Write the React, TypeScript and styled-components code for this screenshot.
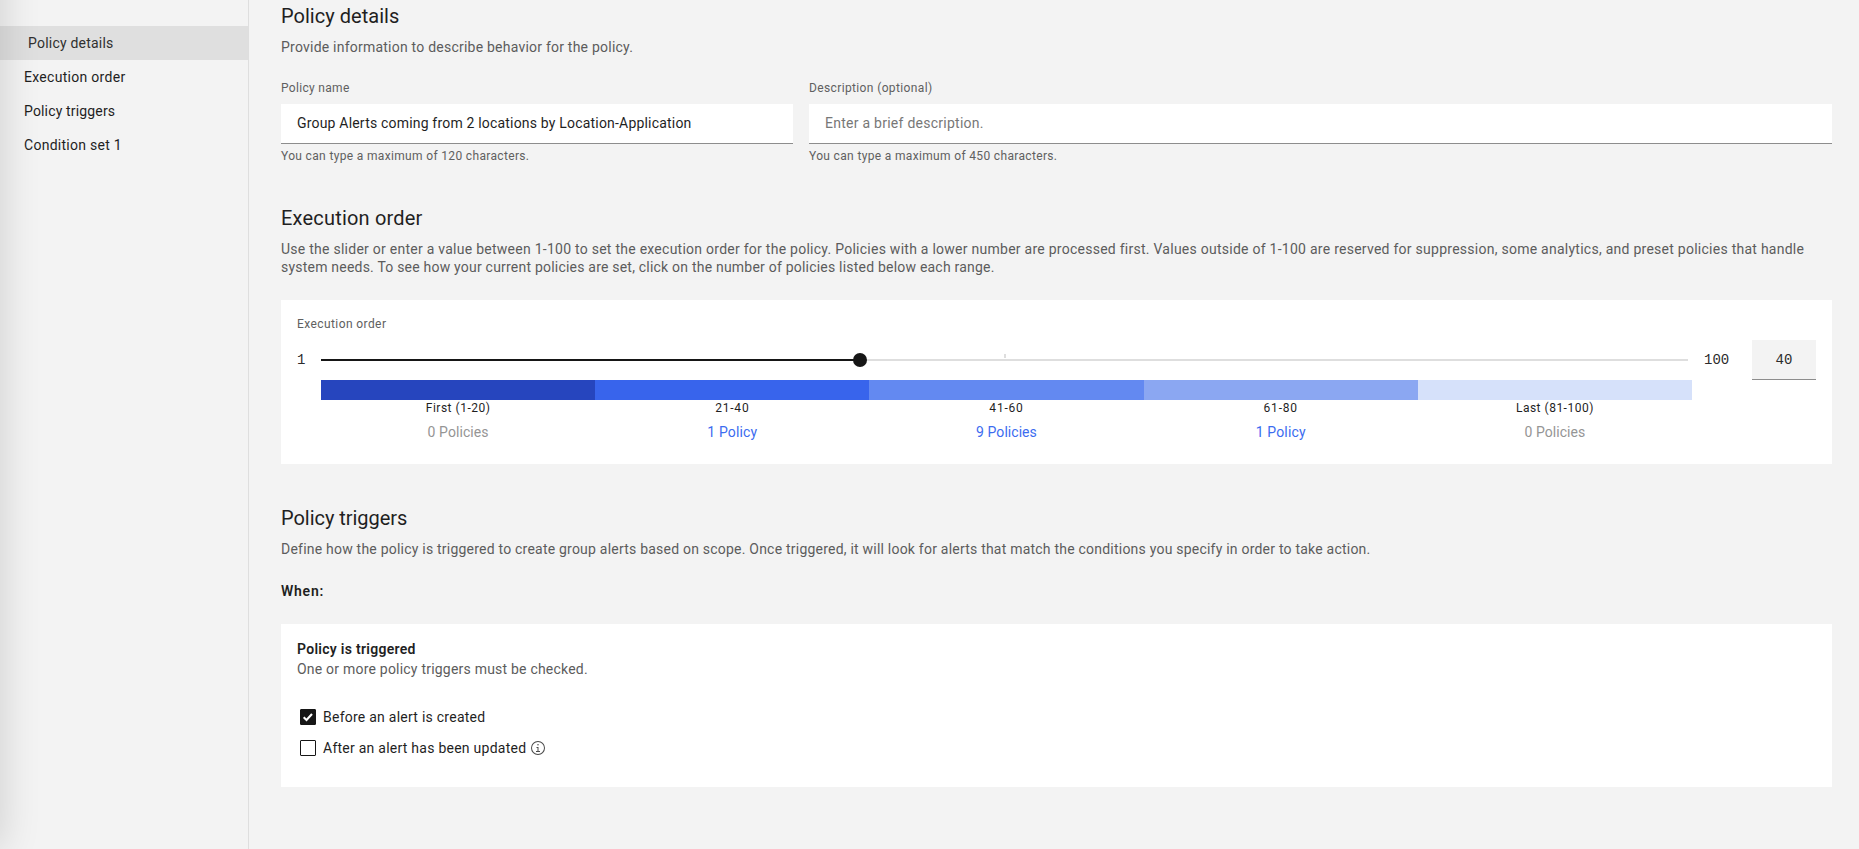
import React from 'react';
import styled, { createGlobalStyle } from 'styled-components';

const GlobalStyle = createGlobalStyle`
  *, *::before, *::after { box-sizing: border-box; }
  body {
    margin: 0;
    background: #f3f3f3;
    color: #1f1f1f;
    font-family: Roboto, "Liberation Sans", sans-serif;
    font-size: 14px;
    line-height: 18px;
  }
`;

const Page = styled.div`
  display: flex;
  height: 849px;
  overflow: hidden;
`;

const EdgeShadow = styled.div`
  position: absolute;
  top: -60px;
  left: -40px;
  width: 40px;
  height: 909px;
  box-shadow: 0 0 40px rgba(0, 0, 0, 0.16);
  pointer-events: none;
`;

const Sidebar = styled.nav`
  flex: 0 0 249px;
  padding-top: 26px;
  border-right: 1px solid #dedede;
`;

const NavItem = styled.a<{ $active?: boolean; $track: number }>`
  display: block;
  height: 34px;
  line-height: 34px;
  padding-left: ${(p) => (p.$active ? 28 : 24)}px;
  background: ${(p) => (p.$active ? '#dfdfdf' : 'transparent')};
  color: ${(p) => (p.$active ? '#303030' : '#1f1f1f')};
  letter-spacing: ${(p) => p.$track}px;
`;

const Main = styled.main`
  flex: 1;
  padding: 3px 27px 0 32px;
`;

const Section = styled.section`
  & + & { margin-top: 41px; }
`;

const Heading = styled.h2<{ $track: number }>`
  margin: 0 0 9px;
  font-size: 20px;
  font-weight: 400;
  line-height: 26px;
  letter-spacing: ${(p) => p.$track}px;
`;

const Lead = styled.p<{ $track: number }>`
  margin: 0;
  color: #5c5c5c;
  letter-spacing: ${(p) => p.$track}px;
  white-space: nowrap;
`;

const Fields = styled.div`
  display: grid;
  grid-template-columns: 512px 1fr;
  gap: 16px;
  margin-top: 24px;
`;

const Field = styled.div`
  display: flex;
  flex-direction: column;
`;

const Caption = styled.label<{ $track: number }>`
  display: block;
  font-size: 12px;
  line-height: 16px;
  color: #606060;
  letter-spacing: ${(p) => p.$track}px;
`;

const TextInput = styled.input<{ $track: number }>`
  height: 40px;
  margin: 8px 0 4px;
  padding: 0 16px 1px;
  border: 0;
  border-bottom: 1px solid #8d8d8d;
  border-radius: 0;
  outline: 0;
  background: #fff;
  color: #1f1f1f;
  font: inherit;
  letter-spacing: ${(p) => p.$track}px;
  &::placeholder { color: #777; opacity: 1; }
`;

const Card = styled.div<{ $bottom: number }>`
  margin-top: 24px;
  padding: 16px 16px ${(p) => p.$bottom}px;
  background: #fff;
`;

const SliderRow = styled.div`
  display: flex;
  align-items: center;
  height: 40px;
  margin-top: 8px;
`;

const Bound = styled.span<{ $width: number }>`
  flex: 0 0 ${(p) => p.$width}px;
  color: #2c2c2c;
  font-family: "Liberation Mono", monospace;
`;

const Track = styled.div`
  position: relative;
  flex: 1;
  height: 2px;
  margin-right: 16px;
  background: #dedede;
`;

const Filled = styled.div`
  height: 2px;
  background: #161616;
`;

const Thumb = styled.div`
  position: absolute;
  top: -6px;
  width: 14px;
  height: 14px;
  margin-left: -7px;
  border-radius: 50%;
  background: #161616;
`;

const Tick = styled.div`
  position: absolute;
  top: -5px;
  left: 50%;
  width: 2px;
  height: 4px;
  margin-left: -1px;
  background: #dedede;
`;

const NumberInput = styled.input`
  width: 64px;
  height: 40px;
  padding: 0;
  border: 0;
  border-bottom: 1px solid #8d8d8d;
  border-radius: 0;
  outline: 0;
  background: #f3f3f3;
  color: #2c2c2c;
  text-align: center;
  font: 14px/18px "Liberation Mono", monospace;
`;

const Bands = styled.div`
  display: grid;
  grid-template-columns: repeat(5, 1fr);
  width: 1371px;
  margin-left: 24px;
`;

const Band = styled.div`
  display: flex;
  flex-direction: column;
  align-items: center;
`;

const Swatch = styled.div<{ $color: string }>`
  align-self: stretch;
  height: 20px;
  background: ${(p) => p.$color};
`;

const Range = styled.span<{ $track: number }>`
  font-size: 12px;
  line-height: 16px;
  letter-spacing: ${(p) => p.$track}px;
`;

const Count = styled.a<{ $empty: boolean; $track: number }>`
  margin-top: 7px;
  color: ${(p) => (p.$empty ? '#959595' : '#3c6cf0')};
  letter-spacing: ${(p) => p.$track}px;
`;

const Strong = styled.h3<{ $track: number; $top?: number; $bottom?: number }>`
  margin: ${(p) => p.$top ?? 0}px 0 ${(p) => p.$bottom ?? 0}px;
  font-size: 14px;
  font-weight: 600;
  line-height: 18px;
  letter-spacing: ${(p) => p.$track}px;
`;

const Options = styled.div`
  display: flex;
  flex-direction: column;
  gap: 13px;
  margin-top: 30px;
  padding-left: 3px;
`;

const Option = styled.div<{ $track: number }>`
  display: flex;
  align-items: center;
  height: 18px;
  letter-spacing: ${(p) => p.$track}px;
  svg { flex: none; }
`;

const OptionText = styled.span`
  margin: 0 4px 0 7px;
`;

const Box = ({ checked }: { checked?: boolean }) => (
  <svg width="16" height="16" viewBox="0 0 16 16">
    <rect x="0.5" y="0.5" width="15" height="15" rx="0.5" fill={checked ? '#161616' : '#fff'} stroke="#161616" />
    {checked && <path d="M3.7 8.3 L6.5 11 L12 5" fill="none" stroke="#fff" strokeWidth="2.1" />}
  </svg>
);

const InfoIcon = () => (
  <svg width="16" height="16" viewBox="0 0 32 32" fill="#4a4a4a">
    <path d="M17 22V14H13v2h2v6H12v2h8V22zM16 8a1.5 1.5 0 1 0 1.5 1.5A1.5 1.5 0 0 0 16 8z" />
    <path d="M16 30A14 14 0 1 1 30 16 14 14 0 0 1 16 30ZM16 4A12 12 0 1 0 28 16 12 12 0 0 0 16 4Z" />
  </svg>
);

const bands = [
  { color: '#2645be', range: 'First (1-20)', rt: 0.5, count: '0 Policies', ct: 0.07, empty: true },
  { color: '#3864ec', range: '21-40', rt: 0.8, count: '1 Policy', ct: 0.16, empty: false },
  { color: '#6389f1', range: '41-60', rt: 0.8, count: '9 Policies', ct: 0.05, empty: false },
  { color: '#8ba7f2', range: '61-80', rt: 0.8, count: '1 Policy', ct: 0.16, empty: false },
  { color: '#d6e1fa', range: 'Last (81-100)', rt: 0.5, count: '0 Policies', ct: 0.07, empty: true },
];

const order = 40;
const fill = `${((order - 1) / 99) * 100}%`;

export default function App() {
  return (
    <Page>
      <GlobalStyle />
      <Sidebar>
        <NavItem $active $track={0.21}>Policy details</NavItem>
        <NavItem $track={0.29}>Execution order</NavItem>
        <NavItem $track={0.16}>Policy triggers</NavItem>
        <NavItem $track={0.27}>Condition set 1</NavItem>
      </Sidebar>
      <Main>
        <Section>
          <Heading $track={0.03}>Policy details</Heading>
          <Lead $track={0.225}>Provide information to describe behavior for the policy.</Lead>
          <Fields>
            <Field>
              <Caption $track={0.31}>Policy name</Caption>
              <TextInput $track={0.19} defaultValue="Group Alerts coming from 2 locations by Location-Application" />
              <Caption as="div" $track={0.34}>You can type a maximum of 120 characters.</Caption>
            </Field>
            <Field>
              <Caption $track={0.37}>Description (optional)</Caption>
              <TextInput $track={0.26} placeholder="Enter a brief description." />
              <Caption as="div" $track={0.34}>You can type a maximum of 450 characters.</Caption>
            </Field>
          </Fields>
        </Section>

        <Section>
          <Heading $track={0.19}>Execution order</Heading>
          <Lead $track={0.257}>
            Use the slider or enter a value between 1-100 to set the execution order for the policy. Policies with a
            lower number are processed first. Values outside of 1-100 are reserved for suppression, some analytics, and
            preset policies that handle
          </Lead>
          <Lead $track={0.212}>
            system needs. To see how your current policies are set, click on the number of policies listed below each
            range.
          </Lead>
          <Card $bottom={23}>
            <Caption $track={0.41}>Execution order</Caption>
            <SliderRow>
              <Bound $width={24}>1</Bound>
              <Track>
                <Filled style={{ width: fill }} />
                <Tick />
                <Thumb style={{ left: fill }} />
              </Track>
              <Bound $width={48}>100</Bound>
              <NumberInput defaultValue={order} />
            </SliderRow>
            <Bands>
              {bands.map((b) => (
                <Band key={b.range}>
                  <Swatch $color={b.color} />
                  <Range $track={b.rt}>{b.range}</Range>
                  <Count $empty={b.empty} $track={b.ct}>{b.count}</Count>
                </Band>
              ))}
            </Bands>
          </Card>
        </Section>

        <Section>
          <Heading $track={-0.04}>Policy triggers</Heading>
          <Lead $track={0.218}>
            Define how the policy is triggered to create group alerts based on scope. Once triggered, it will look for
            alerts that match the conditions you specify in order to take action.
          </Lead>
          <Strong $top={24} $track={0.75}>When:</Strong>
          <Card $bottom={30}>
            <Strong $bottom={2} $track={0.28}>Policy is triggered</Strong>
            <Lead $track={0.215}>One or more policy triggers must be checked.</Lead>
            <Options>
              <Option $track={0.25}>
                <Box checked />
                <OptionText>Before an alert is created</OptionText>
              </Option>
              <Option $track={0.25}>
                <Box />
                <OptionText>After an alert has been updated</OptionText>
                <InfoIcon />
              </Option>
            </Options>
          </Card>
        </Section>
      </Main>
      <EdgeShadow />
    </Page>
  );
}
